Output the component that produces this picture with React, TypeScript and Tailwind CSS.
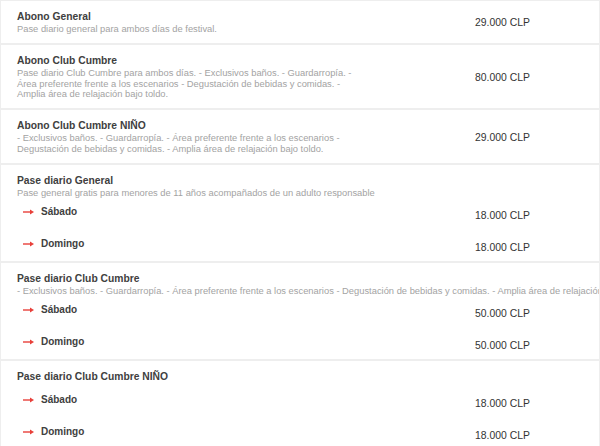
import React from 'react';

interface Day {
  day: string;
  price: string;
}

interface Ticket {
  name: string;
  desc?: string;
  price?: string;
  days?: Day[];
}

const tickets: Ticket[] = [
  {
    name: 'Abono General',
    desc: 'Pase diario general para ambos días de festival.',
    price: '29.000 CLP',
  },
  {
    name: 'Abono Club Cumbre',
    desc: 'Pase diario Club Cumbre para ambos días. - Exclusivos baños. - Guardarropía. - Área preferente frente a los escenarios - Degustación de bebidas y comidas. - Amplia área de relajación bajo toldo.',
    price: '80.000 CLP',
  },
  {
    name: 'Abono Club Cumbre NIÑO',
    desc: '- Exclusivos baños. - Guardarropía. - Área preferente frente a los escenarios - Degustación de bebidas y comidas. - Amplia área de relajación bajo toldo.',
    price: '29.000 CLP',
  },
  {
    name: 'Pase diario General',
    desc: 'Pase general gratis para menores de 11 años acompañados de un adulto responsable',
    days: [
      { day: 'Sábado', price: '18.000 CLP' },
      { day: 'Domingo', price: '18.000 CLP' },
    ],
  },
  {
    name: 'Pase diario Club Cumbre',
    desc: '- Exclusivos baños. - Guardarropía. - Área preferente frente a los escenarios - Degustación de bebidas y comidas. - Amplia área de relajación bajo toldo.',
    days: [
      { day: 'Sábado', price: '50.000 CLP' },
      { day: 'Domingo', price: '50.000 CLP' },
    ],
  },
  {
    name: 'Pase diario Club Cumbre NIÑO',
    days: [
      { day: 'Sábado', price: '18.000 CLP' },
      { day: 'Domingo', price: '18.000 CLP' },
    ],
  },
];

function Arrow() {
  return (
    <svg width="11" height="6" viewBox="0 0 11 6" className="shrink-0">
      <line x1="0" y1="3" x2="8" y2="3" stroke="#e8403a" strokeWidth="1.4" />
      <path d="M7 0.6 L11 3 L7 5.4 Z" fill="#e8403a" />
    </svg>
  );
}

function TicketCard({ ticket }: { ticket: Ticket }) {
  if (ticket.days) {
    return (
      <div className="border border-[#eeeeee] overflow-hidden pl-4 pt-[9px] pb-[5.5px]">
        <h3 className="text-[10.3px] leading-[14px] font-bold text-[#404040]">{ticket.name}</h3>
        {ticket.desc && (
          <p className="text-[9.35px] leading-[10.5px] text-[#a3a3a3] whitespace-nowrap">{ticket.desc}</p>
        )}
        <div className={`flex flex-col gap-[14px] ${ticket.desc ? 'mt-[7px]' : 'mt-[9px]'}`}>
          {ticket.days.map((d) => (
            <div key={d.day} className="flex items-start">
              <div className="w-[458px] flex items-center gap-[7px] pl-[6px] h-[14px]">
                <Arrow />
                <span className="text-[10px] leading-[14px] font-bold text-[#404040]">{d.day}</span>
              </div>
              <span className="pt-[4px] text-[10.4px] leading-[14px] text-[#333333]">{d.price}</span>
            </div>
          ))}
        </div>
      </div>
    );
  }

  return (
    <div className="border border-[#eeeeee] pl-4 pt-[9px] pb-[8.5px] flex items-center">
      <div className="w-[458px] shrink-0">
        <h3 className="text-[10.3px] leading-[14px] font-bold text-[#404040]">{ticket.name}</h3>
        <p className="max-w-[352px] text-[9.35px] leading-[10.5px] text-[#a3a3a3]">{ticket.desc}</p>
      </div>
      <span className="pt-[2px] text-[10.4px] leading-[14px] text-[#333333]">{ticket.price}</span>
    </div>
  );
}

export default function App() {
  return (
    <div className="w-[600px] h-[446px] overflow-hidden bg-white font-['Liberation_Sans',Arial,sans-serif]">
      {tickets.map((t) => (
        <TicketCard key={t.name} ticket={t} />
      ))}
    </div>
  );
}
